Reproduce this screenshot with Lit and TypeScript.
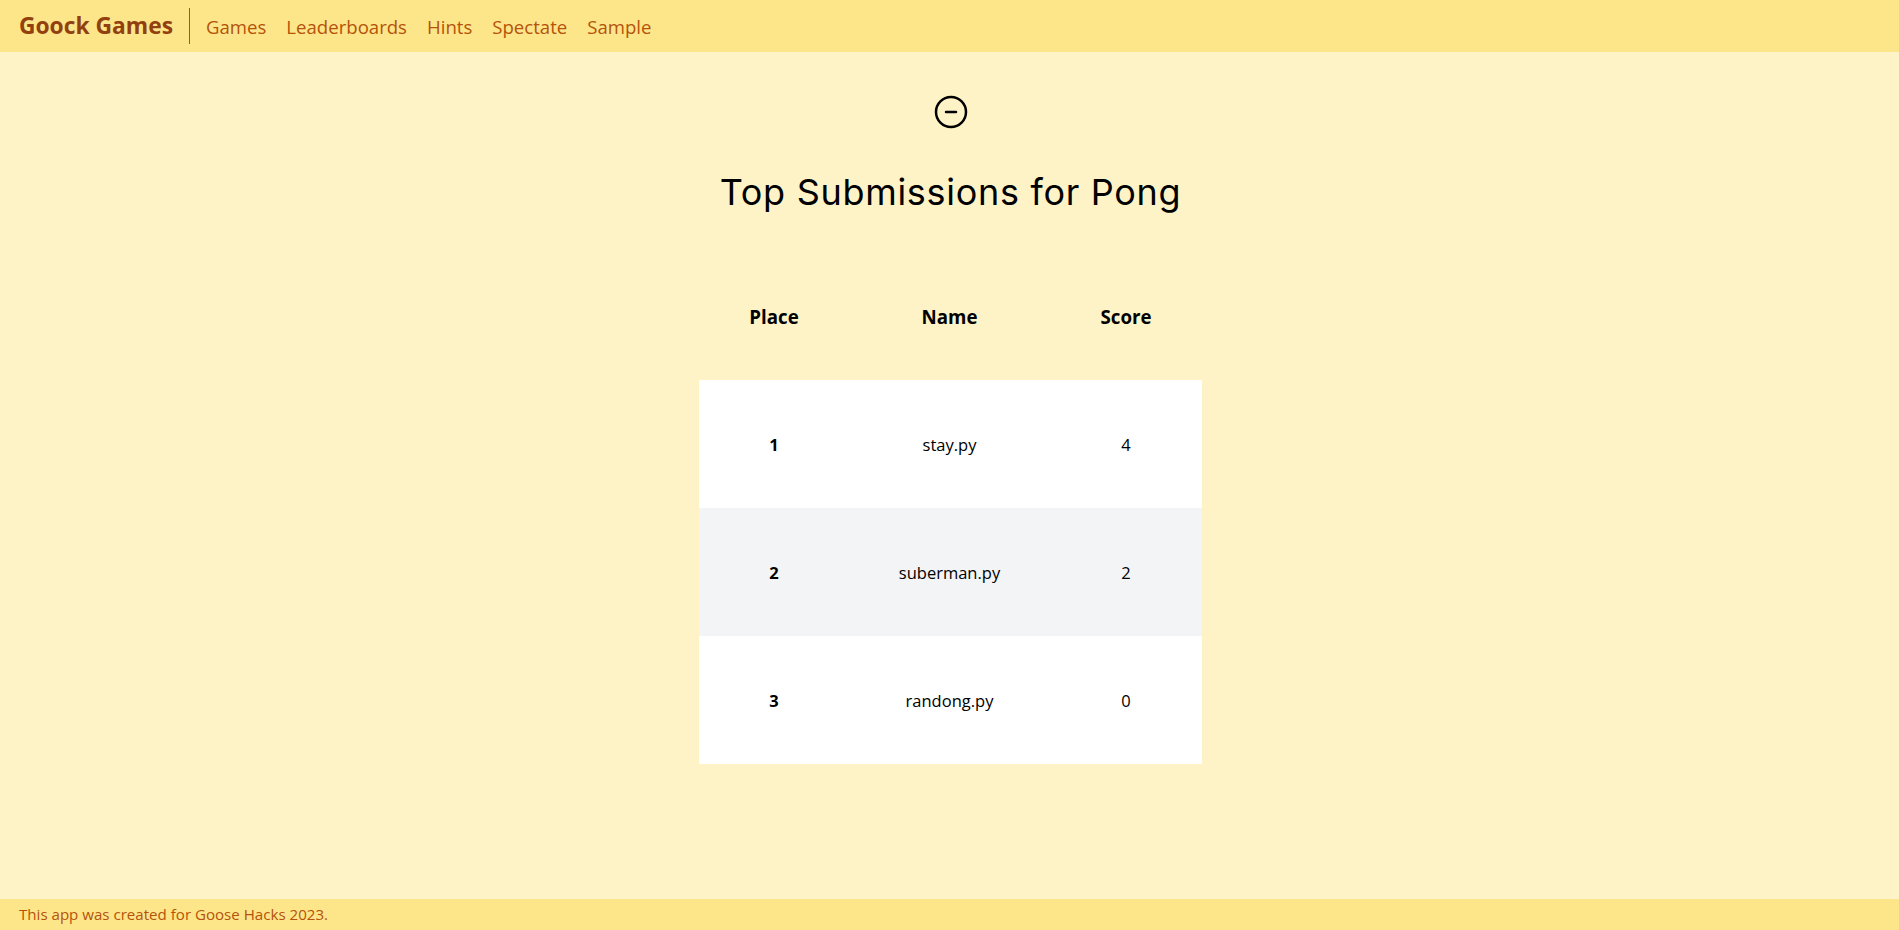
import { LitElement, html, css } from "lit";
import { customElement } from "lit/decorators.js";

const rows = [
  { place: 1, name: "stay.py", score: 4 },
  { place: 2, name: "suberman.py", score: 2 },
  { place: 3, name: "randong.py", score: 0 },
];

@customElement("app-root")
export class AppRoot extends LitElement {
  static styles = css`
    :host {
      display: flex;
      flex-direction: column;
      height: 930px;
      background: #fef3c7;
      font-family: "Open Sans", "Noto Sans", sans-serif;
      color: #000;
      overflow: hidden;
    }
    nav {
      height: 52px;
      flex: none;
      box-sizing: border-box;
      background: #fde68a;
      display: flex;
      align-items: center;
      padding-left: 19px;
      color: #b45309;
      font-size: 18.6px;
    }
    .brand {
      font-weight: 700;
      font-size: 22.8px;
      color: #92400e;
      padding-right: 16px;
      border-right: 1px solid #b45309;
      height: 36px;
      line-height: 36px;
      margin-right: 16px;
    }
    .links {
      display: flex;
      gap: 20px;
    }
    .links a {
      color: inherit;
      text-decoration: none;
    }
    main {
      flex: 1;
      display: flex;
      flex-direction: column;
      align-items: center;
      padding: 42px 0 0 2px;
    }
    .icon {
      display: block;
      width: 36px;
      height: 36px;
    }
    h1 {
      margin: 38px 0 0;
      font-family: Inter, "Open Sans", sans-serif;
      font-weight: 400;
      font-size: 36px;
      line-height: 48px;
      letter-spacing: 0.7px;
    }
    table {
      border-collapse: collapse;
      margin-top: 36px;
      width: 503px;
      table-layout: fixed;
      font-size: 16.5px;
    }
    th {
      font-size: 18.7px;
      font-weight: 700;
      height: 128px;
      padding: 0;
    }
    td {
      height: 128px;
      padding: 0;
      text-align: center;
      background: #fff;
    }
    td.place {
      font-weight: 700;
    }
    tr.alt td {
      background: #f3f4f6;
    }
    .c1 { width: 150px; }
    .c2 { width: 201px; }
    .c3 { width: 152px; }
    footer {
      height: 31px;
      flex: none;
      box-sizing: border-box;
      background: #fde68a;
      color: #b45309;
      font-size: 15.1px;
      line-height: 31px;
      padding-left: 19px;
    }
  `;

  render() {
    return html`
      <nav>
        <span class="brand">Goock Games</span>
        <div class="links">
          <a href="#">Games</a>
          <a href="#">Leaderboards</a>
          <a href="#">Hints</a>
          <a href="#">Spectate</a>
          <a href="#">Sample</a>
        </div>
      </nav>
      <main>
        <svg class="icon" viewBox="0 0 36 36" fill="none" stroke="#000" stroke-width="2.5" stroke-linecap="round">
          <circle cx="18" cy="18" r="15" />
          <path d="M13 18h10" />
        </svg>
        <h1>Top Submissions for Pong</h1>
        <table>
          <thead>
            <tr><th class="c1">Place</th><th class="c2">Name</th><th class="c3">Score</th></tr>
          </thead>
          <tbody>
            ${rows.map(
              (r, i) => html`<tr class=${i % 2 ? "alt" : ""}>
                <td class="place">${r.place}</td><td>${r.name}</td><td>${r.score}</td>
              </tr>`
            )}
          </tbody>
        </table>
      </main>
      <footer>This app was created for Goose Hacks 2023.</footer>
    `;
  }
}
